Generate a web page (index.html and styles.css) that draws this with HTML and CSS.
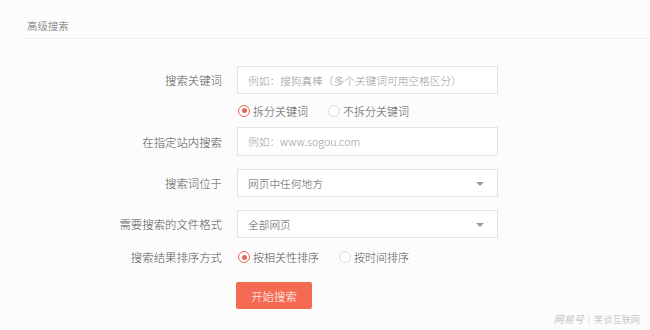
FILE: index.html
```html
<!DOCTYPE html>
<html lang="zh">
<head>
<meta charset="utf-8">
<link rel="stylesheet" href="styles.css">
</head>
<body>
<div class="page">
  <div class="header"><span class="title">高级搜索</span></div>
  <div class="form">
    <div class="row r-kw">
      <div class="label">搜索关键词</div>
      <div class="field input"><span class="ph">例如：搜狗真棒（多个关键词可用空格区分）</span></div>
    </div>
    <div class="row r-radio1">
      <div class="label"></div>
      <div class="radios">
        <span class="radio on"><i></i>拆分关键词</span>
        <span class="radio"><i></i>不拆分关键词</span>
      </div>
    </div>
    <div class="row r-site">
      <div class="label">在指定站内搜索</div>
      <div class="field input tall"><span class="ph">例如：www.sogou.com</span></div>
    </div>
    <div class="row r-pos">
      <div class="label">搜索词位于</div>
      <div class="field select"><span class="val">网页中任何地方</span><b class="arrow"></b></div>
    </div>
    <div class="row r-fmt">
      <div class="label">需要搜索的文件格式</div>
      <div class="field select"><span class="val">全部网页</span><b class="arrow"></b></div>
    </div>
    <div class="row r-radio2">
      <div class="label">搜索结果排序方式</div>
      <div class="radios">
        <span class="radio on"><i></i>按相关性排序</span>
        <span class="radio"><i></i>按时间排序</span>
      </div>
    </div>
    <div class="row r-btn">
      <div class="label"></div>
      <div><span class="btn">开始搜索</span></div>
    </div>
  </div>
  <div class="watermark"><span class="logo">网易号</span><span class="sep">|</span><span>笑谈互联网</span></div>
</div>
</body>
</html>
```
FILE: styles.css
```css
html, body {
  margin: 0;
  padding: 0;
  background: #fcfcfc;
}
body {
  font-family: "Noto Sans CJK SC", "Liberation Sans", sans-serif;
  font-weight: 300;
  color: #555;
}
.page {
  position: relative;
  width: 650px;
  height: 330px;
  overflow: hidden;
}
.header {
  margin-left: 20px;
  height: 39px;
  border-bottom: 1px solid #f1f1f1;
  box-sizing: border-box;
  padding: 19px 0 0 7px;
}
.title {
  font-size: 10.4px;
  line-height: 14px;
  color: #666;
  display: block;
}
.form {
  padding-top: 27px;
}
.row {
  display: flex;
  align-items: center;
}
.label {
  width: 222px;
  text-align: right;
  font-size: 11.4px;
  color: #555;
  margin-right: 15px;
  flex: none;
  white-space: nowrap;
}
.field {
  width: 261px;
  height: 28px;
  box-sizing: border-box;
  border: 1px solid #e3e3e3;
  background: #fff;
  display: flex;
  align-items: center;
  padding-left: 10px;
  font-size: 10.7px;
  position: relative;
}
.field.tall { height: 29px; }
.ph { color: #999; }
.val { color: #555; }
.arrow {
  position: absolute;
  right: 13px;
  top: 12px;
  width: 0;
  height: 0;
  border-left: 4px solid transparent;
  border-right: 4px solid transparent;
  border-top: 4px solid #999;
}
.r-radio1 { height: 33px; }
.r-pos { margin-top: 13px; }
.r-fmt { margin-top: 13px; }
.r-radio2 { height: 38px; }
.r-btn { margin-top: 6px; }
.radios {
  display: flex;
  align-items: center;
  gap: 20px;
  padding-left: 1px;
}
.radio {
  display: flex;
  align-items: center;
  font-size: 11px;
  color: #555;
}
.radio i {
  width: 12px;
  height: 12px;
  box-sizing: border-box;
  border: 1px solid #ddd;
  border-radius: 50%;
  background: #fff;
  margin-right: 3px;
  position: relative;
}
.radio.on i {
  border-color: #e8685a;
}
.radio.on i::after {
  content: "";
  position: absolute;
  left: 2.5px;
  top: 2.5px;
  width: 5px;
  height: 5px;
  border-radius: 50%;
  background: #e8685a;
}
.btn {
  display: flex;
  align-items: center;
  justify-content: center;
  width: 76px;
  height: 27px;
  margin-left: -1px;
  background: #f56a53;
  border-radius: 2px;
  color: #fff;
  font-size: 11.4px;
}
.watermark {
  position: absolute;
  right: 10px;
  bottom: 4px;
  font-size: 9.2px;
  color: #b3b3b3;
  display: flex;
  align-items: center;
}
.logo {
  font-style: italic;
  font-size: 10px;
  color: #aaa;
}
.sep {
  margin: 0 4px;
  color: #ccc;
}
```
